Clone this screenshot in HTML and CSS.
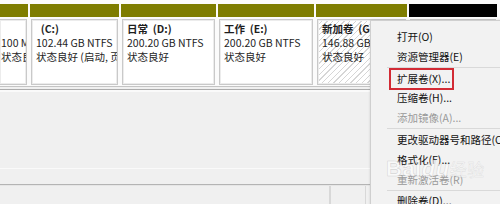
FILE: index.html
```html
<!DOCTYPE html>
<html lang="zh-CN">
<head>
<meta charset="utf-8">
<title>磁盘管理</title>
<link rel="stylesheet" href="styles.css">
</head>
<body>
<div class="screen">
  <div class="disk-row">
    <div class="part part-first w1">
      <div class="bar"></div>
      <div class="box">
        <div class="ln">&nbsp;</div>
        <div class="ln">100 MB NTFS</div>
        <div class="ln">状态良好 (EFI 系统分区)</div>
      </div>
    </div>
    <div class="part w2">
      <div class="bar"></div>
      <div class="box">
        <div class="ln b">&nbsp;&nbsp;(C:)</div>
        <div class="ln">102.44 GB NTFS</div>
        <div class="ln">状态良好 (启动, 页面文件, 故障转储, 主分区)</div>
      </div>
    </div>
    <div class="part w3">
      <div class="bar"></div>
      <div class="box">
        <div class="ln b">日常&nbsp;&nbsp;(D:)</div>
        <div class="ln">200.20 GB NTFS</div>
        <div class="ln">状态良好</div>
      </div>
    </div>
    <div class="part w4">
      <div class="bar"></div>
      <div class="box">
        <div class="ln b">工作&nbsp;&nbsp;(E:)</div>
        <div class="ln">200.20 GB NTFS</div>
        <div class="ln">状态良好</div>
      </div>
    </div>
    <div class="part w5">
      <div class="bar"></div>
      <div class="box hatch">
        <div class="ln b">新加卷&nbsp;&nbsp;(G:)</div>
        <div class="ln">146.88 GB NTFS</div>
        <div class="ln">状态良好</div>
      </div>
    </div>
    <div class="part w6">
      <div class="bar bar-black"></div>
      <div class="box"></div>
    </div>
  </div>

  <div class="lower">
    <div class="lower-top"></div>
    <div class="lower-strip"></div>
    <div class="lower-bottom">
      <div class="cell c1"></div>
      <div class="cell c2"></div>
      <div class="cell c3"></div>
    </div>
  </div>

  <div class="menu">
    <div class="item">打开(O)</div>
    <div class="item">资源管理器(E)</div>
    <div class="sep"></div>
    <div class="item"><span class="annot">扩展卷(X)...</span></div>
    <div class="item">压缩卷(H)...</div>
    <div class="item off">添加镜像(A)...</div>
    <div class="sep sep-wide"></div>
    <div class="item">更改驱动器号和路径(C)...</div>
    <div class="item">格式化(F)...</div>
    <div class="item off">重新激活卷(R)</div>
    <div class="sep"></div>
    <div class="item">删除卷(D)...</div>
  </div>

  <div class="watermark">Bai<span class="paw">du</span><span class="wm-cn">经验</span></div>
</div>
</body>
</html>
```

FILE: styles.css
```css
* { box-sizing: border-box; }
html, body { margin: 0; padding: 0; }
body {
  width: 500px;
  height: 204px;
  overflow: hidden;
  background: #f0f0f0;
  font-family: "Noto Sans CJK SC", "Noto Sans", sans-serif;
  font-size: 10.5px;
  color: #1e1e1e;
}
.screen {
  position: relative;
  width: 500px;
  height: 204px;
  overflow: hidden;
}
.disk-row {
  display: flex;
  gap: 2px;
  height: 87px;
  padding-top: 4px;
  background: #fbfbfb;
  border-bottom: 1px solid #c4c4c4;
}
.part {
  display: flex;
  flex-direction: column;
  flex: none;
  overflow: hidden;
}
.w1 { width: 28px; }
.w2 { width: 89px; }
.w3 { width: 95px; }
.w4 { width: 96px; }
.w5 { width: 91px; }
.w6 { width: 88px; }
.bar {
  height: 13px;
  background: #7e7d00;
  flex: none;
}
.bar-black { background: #000; }
.box {
  flex: 1;
  margin: 2px 1px 1px 1px;
  border: 1px solid #c9c9c9;
  box-shadow: inset 0 0 0 1px #ececec;
  background: #fff;
  padding: 2px 0 0 4px;
  overflow: hidden;
  white-space: nowrap;
}
.part-first .box {
  margin-left: 0;
  border-left: none;
  padding-left: 1px;
}
.hatch {
  background: repeating-linear-gradient(135deg, #fff 0, #fff 3px, #d6d6d6 3px, #d6d6d6 4px);
}
.ln {
  height: 14px;
  line-height: 14px;
}
.b { font-weight: bold; }

.lower {
  display: flex;
  flex-direction: column;
  padding-top: 2px;
}
.lower-top {
  height: 80px;
  border-top: 1px solid #acacac;
  box-shadow: inset 0 2px 0 #fafafa;
  border-bottom: 1px solid #fafafa;
}
.lower-strip {
  height: 16px;
  border-bottom: 1px solid #b4b4b4;
}
.lower-bottom {
  display: flex;
  height: 20px;
  border-top: 1px solid #e6e6e6;
}
.cell { height: 100%; }
.c1 { width: 331px; border-right: 2px solid #d8d8d8; }
.c2 { width: 35px; border-right: 1px solid #d8d8d8; }
.c3 { flex: 1; }

.menu {
  position: absolute;
  left: 370px;
  top: 20px;
  width: 140px;
  height: 200px;
  background: #f2f2f2;
  border: 1px solid #cfcfcf;
  box-shadow: 1px 1px 3px rgba(0, 0, 0, 0.25);
  padding-top: 6px;
  display: flex;
  flex-direction: column;
  white-space: nowrap;
  font-size: 10.5px;
  color: #111;
}
.item {
  height: 20px;
  line-height: 20px;
  padding-left: 26px;
  flex: none;
}
.item.off { color: #999; }
.sep {
  height: 1px;
  margin-left: 16px;
  background: #d9d9d9;
  flex: none;
}
.sep-wide {
  height: 2px;
  background: none;
  border-top: 1px solid #d9d9d9;
}
.annot {
  display: inline-block;
  line-height: 16px;
  margin-left: -8px;
  padding: 1px 2px 1px 6px;
  border: 2px solid #d22b35;
}
.watermark {
  position: absolute;
  left: 386px;
  top: 156px;
  font-family: "Liberation Sans", sans-serif;
  font-size: 22px;
  font-weight: bold;
  color: rgba(255, 255, 255, 0.6);
  -webkit-text-stroke: 0.6px rgba(150, 150, 150, 0.35);
  letter-spacing: 0.5px;
}
.paw { font-style: italic; }
.wm-cn {
  font-family: "Noto Sans CJK SC", sans-serif;
  font-size: 17px;
  font-weight: normal;
  color: rgba(255, 255, 255, 0.55);
  -webkit-text-stroke: 0.4px rgba(170, 170, 170, 0.35);
}
```
